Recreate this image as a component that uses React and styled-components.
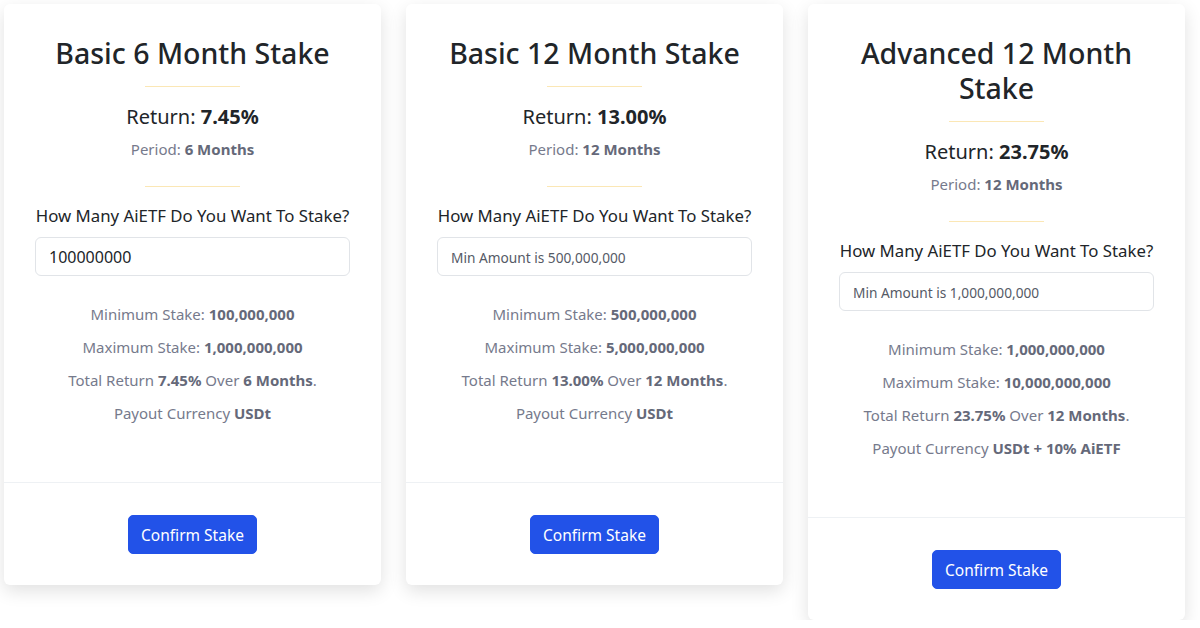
import React from "react";
import styled, { createGlobalStyle } from "styled-components";

const GlobalStyle = createGlobalStyle`
  * { box-sizing: border-box; }
  body {
    margin: 0;
    background: #ffffff;
    font-family: "Noto Sans", "Open Sans", sans-serif;
    color: #212529;
  }
`;

const plans = [
  {
    title: "Basic 6 Month Stake",
    rate: "7.45%",
    period: "6 Months",
    value: "100000000",
    placeholder: "Min Amount is 100,000,000",
    min: "100,000,000",
    max: "1,000,000,000",
    payout: "USDt",
  },
  {
    title: "Basic 12 Month Stake",
    rate: "13.00%",
    period: "12 Months",
    value: "",
    placeholder: "Min Amount is 500,000,000",
    min: "500,000,000",
    max: "5,000,000,000",
    payout: "USDt",
  },
  {
    title: "Advanced 12 Month Stake",
    rate: "23.75%",
    period: "12 Months",
    value: "",
    placeholder: "Min Amount is 1,000,000,000",
    min: "1,000,000,000",
    max: "10,000,000,000",
    payout: "USDt + 10% AiETF",
  },
];

function StakeCard({ plan }) {
  return (
    <Card>
      <CardBody>
        <Title>{plan.title}</Title>
        <Divider $top={15} $bottom={17} />
        <Return>
          Return: <b>{plan.rate}</b>
        </Return>
        <Period>
          Period: <b>{plan.period}</b>
        </Period>
        <Divider $top={26} $bottom={17} />
        <Question>How Many AiETF Do You Want To Stake?</Question>
        <AmountInput
          type="text"
          defaultValue={plan.value}
          placeholder={plan.placeholder}
        />
        <Details>
          <Muted>
            Minimum Stake: <b>{plan.min}</b>
          </Muted>
          <Muted>
            Maximum Stake: <b>{plan.max}</b>
          </Muted>
          <Muted>
            Total Return <b>{plan.rate}</b> Over <b>{plan.period}</b>.
          </Muted>
          <Muted>
            Payout Currency <b>{plan.payout}</b>
          </Muted>
        </Details>
      </CardBody>
      <CardFooter>
        <ConfirmButton>Confirm Stake</ConfirmButton>
      </CardFooter>
    </Card>
  );
}

export default function App() {
  return (
    <>
      <GlobalStyle />
      <Row>
        {plans.map((p) => (
          <StakeCard key={p.title} plan={p} />
        ))}
      </Row>
    </>
  );
}

const Row = styled.div`
  display: grid;
  grid-template-columns: repeat(3, 377px);
  gap: 25px;
  align-items: start;
  padding: 4px 0 0 4px;
`;

const Card = styled.div`
  background: #fff;
  border-radius: 6px;
  box-shadow: 0 6px 18px rgba(0, 0, 0, 0.12);
  display: flex;
  flex-direction: column;
`;

const CardBody = styled.div`
  padding: 32px 31px 58px;
  display: flex;
  flex-direction: column;
  align-items: center;
  text-align: center;
`;

const Title = styled.h2`
  margin: 0;
  font-size: 28.5px;
  font-weight: 500;
  line-height: 35px;
  color: #212529;
`;

const Divider = styled.hr`
  width: 95px;
  border: 0;
  border-top: 1px solid #fbe7b5;
  margin: ${(p) => p.$top}px 0 ${(p) => p.$bottom}px;
`;

const Return = styled.div`
  font-size: 20px;
  line-height: 26px;
  color: #212529;
  b {
    font-weight: 700;
  }
`;

const Muted = styled.div`
  font-size: 15px;
  line-height: 22px;
  color: #767a8c;
  b {
    font-weight: 700;
    color: #656979;
  }
`;

const Period = styled(Muted)`
  margin-top: 8px;
`;

const Question = styled.div`
  font-size: 16.8px;
  line-height: 24px;
  color: #212529;
`;

const AmountInput = styled.input`
  width: 100%;
  height: 39px;
  margin-top: 9px;
  border: 1px solid #e1e4e8;
  border-radius: 6px;
  padding: 0 13px;
  font-family: inherit;
  font-size: 16px;
  color: #212529;
  outline: none;
  &::placeholder {
    font-size: 13.7px;
    color: #555a66;
  }
`;

const Details = styled.div`
  margin-top: 27px;
  display: flex;
  flex-direction: column;
  align-items: center;
  gap: 11px;
`;

const CardFooter = styled.div`
  border-top: 1px solid #eef1f4;
  padding: 32px 0 31px;
  display: flex;
  justify-content: center;
`;

const ConfirmButton = styled.button`
  height: 39px;
  padding: 0 12px;
  border: 1px solid #2252e8;
  border-radius: 5px;
  background: #2252e8;
  color: #fff;
  font-family: inherit;
  font-size: 15.5px;
  cursor: pointer;
`;
